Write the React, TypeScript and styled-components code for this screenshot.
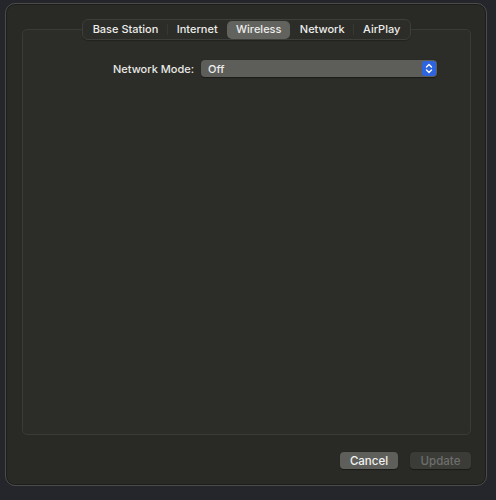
import React from "react";
import styled, { createGlobalStyle } from "styled-components";

const Global = createGlobalStyle`
  html, body { margin: 0; padding: 0; background: #24262b; }
  body { font-family: Inter, "Noto Sans", "Liberation Sans", sans-serif; -webkit-font-smoothing: antialiased; }
`;

const Page = styled.div`
  width: 496px;
  height: 500px;
  box-sizing: border-box;
  padding: 3px 9px 14px 5px;
  display: flex;
`;

const Window = styled.div`
  flex: 1;
  display: flex;
  flex-direction: column;
  background: #292a25;
  border: 1px solid #4b4c49;
  border-radius: 10px;
  box-shadow: inset 0 0 0 1px #1d1e1b;
  padding: 25px 15px 16px 16px;
`;

const GroupBox = styled.div`
  flex: 1;
  display: flex;
  flex-direction: column;
  background: #2c2d28;
  border: 1px solid #3a3b36;
  border-radius: 5px;
  padding: 0 33px 0 0;
`;

const TabBar = styled.div`
  align-self: center;
  margin-top: -11px;
  margin-left: 33px;
  display: flex;
  align-items: center;
  height: 19px;
  padding: 0 1px;
  background: #2c2d29;
  border: 1px solid #3e3f3a;
  border-radius: 6px;
  box-shadow: 0 1px 1px rgba(0, 0, 0, 0.25);
`;

const Tab = styled.div<{ $active?: boolean }>`
  height: 17px;
  display: flex;
  align-items: center;
  padding: 0 8.7px 1px;
  font-size: 11px;
  font-weight: 500;
  color: #ececea;
  border-radius: 5px;
  background: ${(p) => (p.$active ? "#62635f" : "transparent")};
`;

const Sep = styled.div<{ $hidden?: boolean }>`
  width: 1px;
  height: 11px;
  background: ${(p) => (p.$hidden ? "transparent" : "#373833")};
`;

const Row = styled.div`
  display: flex;
  align-items: center;
  justify-content: flex-end;
  margin-top: 20px;
  gap: 7px;
`;

const Label = styled.div`
  font-size: 11px;
  font-weight: 500;
  color: #e8e8e6;
`;

const Popup = styled.div`
  width: 236px;
  height: 17px;
  box-sizing: border-box;
  display: flex;
  align-items: center;
  justify-content: space-between;
  background: #5d5e5a;
  border-radius: 4px;
  padding: 0 1px 0 7px;
  font-size: 11px;
  font-weight: 500;
  color: #ececea;
  box-shadow: 0 0.5px 1px rgba(0, 0, 0, 0.4);
`;

const Stepper = styled.div`
  width: 14px;
  height: 15px;
  border-radius: 3px;
  background: #2f64e0;
  display: flex;
  align-items: center;
  justify-content: center;
`;

const Footer = styled.div`
  display: flex;
  justify-content: flex-end;
  gap: 12px;
  margin-top: 17px;
`;

const Button = styled.div<{ $disabled?: boolean }>`
  height: 17px;
  box-sizing: border-box;
  display: flex;
  align-items: center;
  justify-content: center;
  width: ${(p) => (p.$disabled ? "61px" : "58px")};
  border-radius: 4px;
  font-size: 11.5px;
  font-weight: 500;
  background: ${(p) => (p.$disabled ? "#3b3c38" : "#5e5f5b")};
  color: ${(p) => (p.$disabled ? "#6e6f6b" : "#f2f2f0")};
  box-shadow: 0 0.5px 1px rgba(0, 0, 0, 0.4);
`;

const tabs = ["Base Station", "Internet", "Wireless", "Network", "AirPlay"];
const activeIndex = 2;

export default function App() {
  return (
    <>
      <Global />
      <Page>
        <Window>
          <GroupBox>
            <TabBar>
              {tabs.map((t, i) => (
                <React.Fragment key={t}>
                  {i > 0 && (
                    <Sep $hidden={i === activeIndex || i - 1 === activeIndex} />
                  )}
                  <Tab $active={i === activeIndex}>{t}</Tab>
                </React.Fragment>
              ))}
            </TabBar>
            <Row>
              <Label>Network Mode:</Label>
              <Popup>
                <span>Off</span>
                <Stepper>
                  <svg width="8" height="11" viewBox="0 0 8 11">
                    <path
                      d="M1.5 4 L4 1.5 L6.5 4 M1.5 7 L4 9.5 L6.5 7"
                      fill="none"
                      stroke="#ffffff"
                      strokeWidth="1.4"
                      strokeLinecap="round"
                      strokeLinejoin="round"
                    />
                  </svg>
                </Stepper>
              </Popup>
            </Row>
          </GroupBox>
          <Footer>
            <Button>Cancel</Button>
            <Button $disabled>Update</Button>
          </Footer>
        </Window>
      </Page>
    </>
  );
}
